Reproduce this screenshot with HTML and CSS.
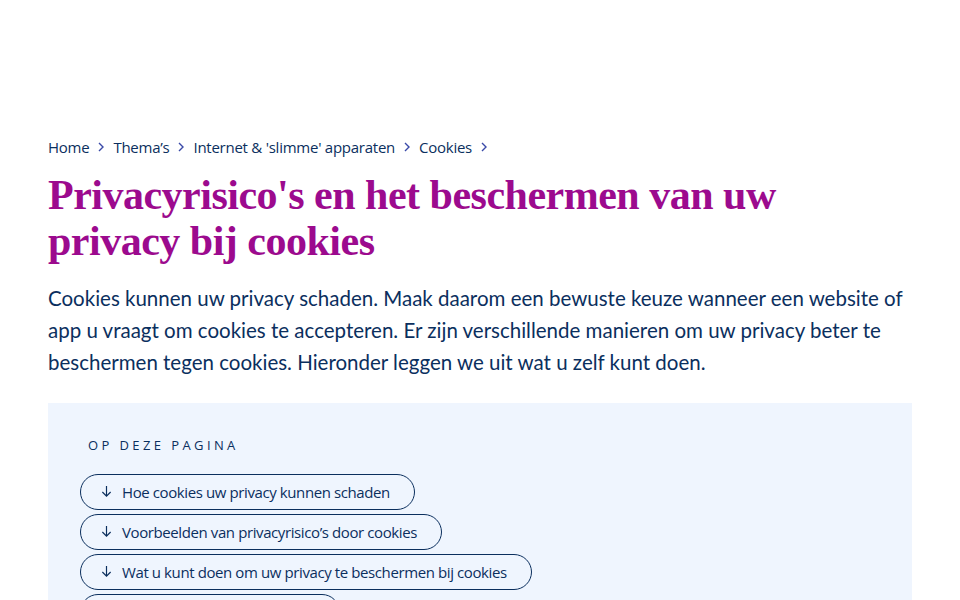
FILE: index.html
```html
<!DOCTYPE html>
<html lang="nl">
<head>
<meta charset="utf-8">
<title>Privacyrisico's en het beschermen van uw privacy bij cookies</title>
<link rel="stylesheet" href="styles.css">
</head>
<body>
<div class="page">
  <nav class="crumbs">
    <a href="#">Home</a><svg class="chev" viewBox="0 0 8 12"><path d="M2 2l4 4-4 4"/></svg>
    <a href="#">Thema’s</a><svg class="chev" viewBox="0 0 8 12"><path d="M2 2l4 4-4 4"/></svg>
    <a href="#">Internet &amp; 'slimme' apparaten</a><svg class="chev" viewBox="0 0 8 12"><path d="M2 2l4 4-4 4"/></svg>
    <a href="#">Cookies</a><svg class="chev" viewBox="0 0 8 12"><path d="M2 2l4 4-4 4"/></svg>
  </nav>
  <h1 class="title">Privacyrisico's en het beschermen van uw privacy bij cookies</h1>
  <p class="intro">Cookies kunnen uw privacy schaden. Maak daarom een bewuste keuze wanneer een website of app u vraagt om cookies te accepteren. Er zijn verschillende manieren om uw privacy beter te beschermen tegen cookies. Hieronder leggen we uit wat u zelf kunt doen.</p>
  <section class="toc">
    <div class="toc-label">OP DEZE PAGINA</div>
    <ul class="toc-list">
      <li><a class="pill" href="#"><svg class="arrow" viewBox="0 0 12 14"><path d="M6 1v11M1.5 7.5L6 12l4.5-4.5"/></svg>Hoe cookies uw privacy kunnen schaden</a></li>
      <li><a class="pill" href="#"><svg class="arrow" viewBox="0 0 12 14"><path d="M6 1v11M1.5 7.5L6 12l4.5-4.5"/></svg>Voorbeelden van privacyrisico’s door cookies</a></li>
      <li><a class="pill" href="#"><svg class="arrow" viewBox="0 0 12 14"><path d="M6 1v11M1.5 7.5L6 12l4.5-4.5"/></svg>Wat u kunt doen om uw privacy te beschermen bij cookies</a></li>
      <li><a class="pill" href="#"><svg class="arrow" viewBox="0 0 12 14"><path d="M6 1v11M1.5 7.5L6 12l4.5-4.5"/></svg>Meer informatie over cookies</a></li>
    </ul>
  </section>
</div>
</body>
</html>
```

FILE: styles.css
```css
* { box-sizing: border-box; }
body {
  margin: 0;
  background: #fff;
  color: #0b2f5e;
  font-family: "Lato", "Open Sans", sans-serif;
}
.page {
  padding: 136px 48px 0 48px;
}
.crumbs {
  display: flex;
  align-items: center;
  font-size: 15px;
  line-height: 22px;
  font-family: "Open Sans", sans-serif;
  letter-spacing: -0.25px;
}
.crumbs a {
  color: #0b2f5e;
  text-decoration: none;
}
.chev {
  width: 8px;
  height: 12px;
  margin: 0 8px 0 8px;
  fill: none;
  stroke: #3a4aa8;
  stroke-width: 1.4;
}
.title {
  margin: 14px 0 0 0;
  font-family: "Liberation Serif", serif;
  font-weight: bold;
  font-size: 42px;
  line-height: 46px;
  color: #9c0a8e;
  letter-spacing: -0.5px;
  max-width: 780px;
}
.intro {
  margin: 18px 0 0 0;
  font-size: 20.5px;
  line-height: 32px;
  color: #0b2f5e;
}
.toc {
  margin-top: 25px;
  background: #eff5fe;
  padding: 33px 32px 0 32px;
  height: 197px;
  overflow: hidden;
}
.toc-label {
  padding-left: 8px;
  font-size: 13px;
  letter-spacing: 3.4px;
  line-height: 18px;
  font-family: "Open Sans", sans-serif;
}
.toc-list {
  list-style: none;
  margin: 20px 0 0 0;
  padding: 0;
  display: flex;
  flex-direction: column;
  align-items: flex-start;
  gap: 4px;
}
.pill {
  display: flex;
  align-items: center;
  height: 36px;
  padding: 0 24px 0 20px;
  border: 1px solid #0b2f5e;
  border-radius: 18px;
  color: #0b2f5e;
  text-decoration: none;
  font-family: "Open Sans", sans-serif;
  font-size: 15px;
  letter-spacing: -0.4px;
  padding-bottom: 1px;
}
.arrow {
  width: 11px;
  height: 13px;
  margin-right: 10px;
  fill: none;
  stroke: #0b2f5e;
  stroke-width: 1.3;
}
```
